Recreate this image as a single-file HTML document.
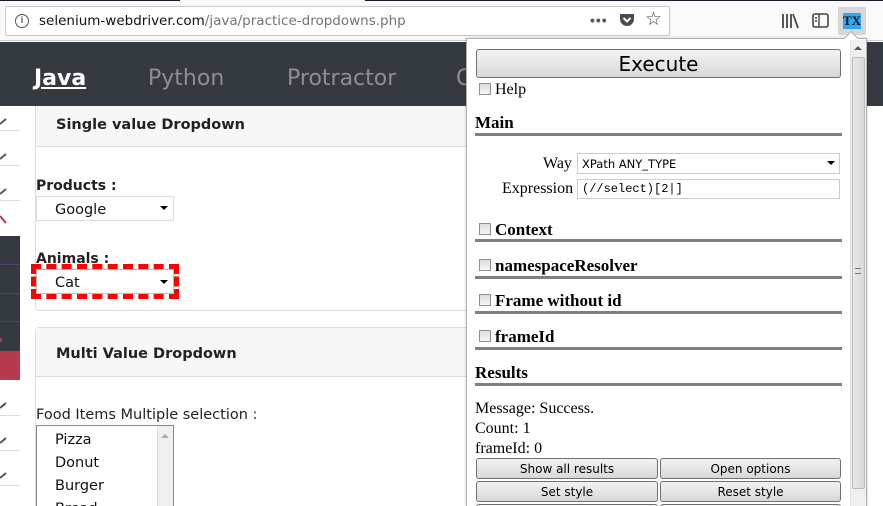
<!DOCTYPE html>
<html><head><meta charset="utf-8"><style>
*{box-sizing:border-box;margin:0;padding:0}
html,body{width:883px;height:506px;overflow:hidden}
body{background:#fff;font-family:"Liberation Sans",sans-serif}
#w{position:relative;width:883px;height:506px;overflow:hidden}
.a{position:absolute}
.sans{font-family:"DejaVu Sans","Liberation Sans",sans-serif}
.serif{font-family:"Liberation Serif",serif}
.btn{position:absolute;border:1px solid #707070;border-radius:3px;background:linear-gradient(#f2f2f2,#e6e6e6 50%,#d8d8d8);text-align:center;color:#000}
.cb{position:absolute;width:12px;height:12px;border:1px solid #8f8f8f;background:linear-gradient(#ddd,#f6f6f6)}
.rule{position:absolute;left:475px;width:367px;height:3px;background:#808080}
.h{position:absolute;left:475px;font:bold 17px "Liberation Serif",serif;color:#000}
.pen{position:absolute;left:0;width:20px;height:1px;background:#ddd}
</style></head><body><div id="w">
<div class="a" style="left:0;top:0;width:883px;height:41px;background:#f9f9fa;border-bottom:1px solid #ccc"></div>
<div class="a" style="left:0;top:0;width:180px;height:1px;background:#1a1a2a"></div>
<div class="a" style="left:365px;top:0;width:518px;height:1px;background:#1a1a2a"></div>
<div class="a" style="left:5px;top:6px;width:665px;height:30px;background:#fff;border:1px solid #c8c8c8;border-radius:2px"></div>
<div class="a" style="left:15px;top:14px;width:14px;height:14px;border:1.5px solid #555;border-radius:50%;font:bold 9px 'Liberation Sans';text-align:center;line-height:11px;color:#555">i</div>
<div class="a sans" style="left:39px;top:13px;font-size:13.5px;color:#111">selenium-webdriver.com<span style="color:#737373">/java/practice-dropdowns.php</span></div>
<div class="a" style="left:590px;top:12px;font:bold 14px 'Liberation Sans';color:#555;letter-spacing:1px">•••</div>
<svg class="a" style="left:619px;top:12px" width="16" height="16"><path d="M1 2h14v5a7 7 0 0 1-14 0z" fill="#4a4a4f"/><path d="M4.5 6l3.5 3.5 3.5-3.5" stroke="#fff" stroke-width="2" fill="none"/></svg>
<div class="a" style="left:645px;top:8px;font-size:19px;color:#444">☆</div>
<svg class="a" style="left:781px;top:13px" width="18" height="16"><path d="M2 1v14M6 1v14M10 1v14M12 1l5 14" stroke="#444" stroke-width="1.8"/></svg>
<svg class="a" style="left:812px;top:13px" width="17" height="15"><rect x="1" y="1" width="15" height="13" rx="2" fill="none" stroke="#444" stroke-width="1.6"/><path d="M7 1v13M3 5h2M3 8h2" stroke="#444" stroke-width="1.4"/></svg>
<div class="a" style="left:838px;top:7px;width:28px;height:28px;background:#d6d6d8;border-radius:2px"></div>
<div class="a serif" style="left:843px;top:13px;width:18px;height:16px;background:#2ea8f5;font:bold 13px 'Liberation Serif';color:#111;line-height:16px;text-align:center">TX</div>

<div class="a" style="left:0;top:42px;width:883px;height:64px;background:#343a40"></div>
<div class="a" style="left:34px;top:66px;font:bold 22px 'DejaVu Sans';color:#fff;text-decoration:underline">Java</div>
<div class="a sans" style="left:148px;top:66px;font-size:22px;color:#8c8f93">Python</div>
<div class="a sans" style="left:287px;top:66px;font-size:22px;color:#8c8f93">Protractor</div>
<div class="a sans" style="left:456px;top:66px;font-size:22px;color:#8c8f93">C</div>

<div class="a" style="left:0;top:106px;width:20px;height:400px;background:#fff"></div>
<div class="a" style="left:0;top:236px;width:20px;height:115px;background:#343a40"></div>
<div class="pen" style="top:264px;background:#4a4560"></div><div class="pen" style="top:293px;background:#4a4560"></div><div class="pen" style="top:321px;background:#4a4560"></div>
<div class="a" style="left:0;top:338px;width:2px;height:4px;background:#b03a4a"></div>
<div class="a" style="left:0;top:351px;width:20px;height:29px;background:#b53a4e"></div>
<div class="pen" style="top:130px"></div><div class="pen" style="top:165px"></div><div class="pen" style="top:200px"></div><div class="pen" style="top:415px"></div><div class="pen" style="top:450px"></div><div class="pen" style="top:485px"></div>
<svg class="a" style="left:0;top:114px" width="8" height="100"><path d="M0 10l6-5M0 45l6-5M0 80l6-5" stroke="#555" stroke-width="2"/></svg>
<svg class="a" style="left:0;top:214px" width="8" height="12"><path d="M0 2l6 7" stroke="#b03a4a" stroke-width="2"/></svg>
<svg class="a" style="left:0;top:398px" width="8" height="100"><path d="M0 10l6-5M0 45l6-5M0 80l6-5" stroke="#555" stroke-width="2"/></svg>

<div class="a" style="left:35px;top:106px;width:440px;height:205px;border:1px solid #ddd;border-top:none;border-radius:0 0 4px 4px"></div>
<div class="a" style="left:36px;top:106px;width:440px;height:41px;background:#f7f7f7;border-bottom:1px solid #ddd"></div>
<div class="a sans" style="left:56px;top:117px;font-size:14.5px;font-weight:bold;color:#222">Single value Dropdown</div>
<div class="a sans" style="left:36px;top:178px;font-size:14px;font-weight:bold;color:#222">Products :</div>
<div class="a" style="left:36px;top:196px;width:138px;height:25px;border:1px solid #ddd;background:#fff"></div>
<div class="a sans" style="left:55px;top:202px;font-size:14.5px;color:#111">Google</div>
<div class="a" style="left:160px;top:206px;border:4px solid transparent;border-top:4px solid #000;border-bottom:none"></div>
<div class="a sans" style="left:36px;top:251px;font-size:14px;font-weight:bold;color:#222">Animals :</div>
<div class="a" style="left:31px;top:264px;width:148px;height:35px;border:5px dashed #f00"></div>
<div class="a" style="left:36px;top:269px;width:138px;height:25px;border:1px solid #bbb;background:#fff"></div>
<div class="a sans" style="left:55px;top:275px;font-size:14.5px;color:#111">Cat</div>
<div class="a" style="left:160px;top:280px;border:4px solid transparent;border-top:4px solid #000;border-bottom:none"></div>

<div class="a" style="left:35px;top:327px;width:440px;height:190px;border:1px solid #ddd;border-radius:4px 4px 0 0"></div>
<div class="a" style="left:36px;top:328px;width:440px;height:49px;background:#f7f7f7;border-bottom:1px solid #ddd"></div>
<div class="a sans" style="left:56px;top:346px;font-size:14.5px;font-weight:bold;color:#222">Multi Value Dropdown</div>
<div class="a sans" style="left:36px;top:407px;font-size:14.5px;color:#222">Food Items Multiple selection :</div>
<div class="a" style="left:36px;top:425px;width:138px;height:90px;border:1px solid #888;background:#fff"></div>
<div class="a" style="left:157px;top:426px;width:16px;height:90px;background:#f0f0f0;border-left:1px solid #ddd"></div>
<div class="a" style="left:161px;top:434px;border:4px solid transparent;border-bottom:4px solid #aaa;border-top:none"></div>
<div class="a sans" style="left:55px;top:429px;font-size:14.5px;color:#111;line-height:23px">Pizza<br>Donut<br>Burger<br>Bread</div>

<div class="a" style="left:466px;top:38px;width:401px;height:470px;background:#fff;border:1px solid #b0b0b0;box-shadow:0 0 3px rgba(0,0,0,.2)"></div>
<div class="a" style="left:846px;top:33px;width:10px;height:10px;background:#fff;border-left:1px solid #b0b0b0;border-top:1px solid #b0b0b0;transform:rotate(45deg)"></div>
<div class="a" style="left:850px;top:40px;width:16px;height:466px;background:#f0f0f0;border-left:1px solid #e0e0e0"></div>
<div class="a" style="left:854px;top:46px;border:4px solid transparent;border-bottom:4px solid #555;border-top:none"></div>
<div class="a" style="left:852px;top:57px;width:13px;height:432px;border:1px solid #bbb;border-radius:2px;background:linear-gradient(90deg,#e8e8e8,#d8d8d8)"></div>
<div class="a" style="left:855px;top:268px;width:6px;height:6px;border-top:1px solid #777;border-bottom:1px solid #777"></div>
<div class="btn sans" style="left:476px;top:49px;width:365px;height:29px;font-size:20px;line-height:28px">Execute</div>
<div class="cb" style="left:479px;top:83px"></div>
<div class="a serif" style="left:495px;top:81px;font-size:16px">Help</div>
<div class="h" style="top:113px">Main</div><div class="rule" style="top:133px"></div>
<div class="a serif" style="left:543px;top:155px;font-size:16px">Way</div>
<div class="a" style="left:577px;top:153px;width:263px;height:21px;border:1px solid #ccc"></div>
<div class="a sans" style="left:582px;top:157px;font-size:11.5px">XPath ANY_TYPE</div>
<div class="a" style="left:827px;top:161px;border:4px solid transparent;border-top:4px solid #000;border-bottom:none"></div>
<div class="a serif" style="left:502px;top:180px;font-size:16px">Expression</div>
<div class="a" style="left:577px;top:179px;width:263px;height:20px;border:1px solid #ccc"></div>
<div class="a" style="left:582px;top:182px;font:12px 'Liberation Mono',monospace">(//select)[2|]</div>
<div class="cb" style="left:479px;top:223px"></div><div class="h" style="left:495px;top:220px">Context</div><div class="rule" style="top:239px"></div>
<div class="cb" style="left:479px;top:259px"></div><div class="h" style="left:495px;top:256px">namespaceResolver</div><div class="rule" style="top:276px"></div>
<div class="cb" style="left:479px;top:294px"></div><div class="h" style="left:495px;top:291px">Frame without id</div><div class="rule" style="top:311px"></div>
<div class="cb" style="left:479px;top:330px"></div><div class="h" style="left:495px;top:327px">frameId</div><div class="rule" style="top:347px"></div>
<div class="h" style="top:363px">Results</div><div class="rule" style="top:383px"></div>
<div class="a serif" style="left:475px;top:399px;font-size:16px;line-height:20px">Message: Success.<br>Count: 1<br>frameId: 0</div>
<div class="btn sans" style="left:476px;top:458px;width:182px;height:21px;font-size:12px;line-height:20px">Show all results</div>
<div class="btn sans" style="left:660px;top:458px;width:181px;height:21px;font-size:12px;line-height:20px">Open options</div>
<div class="btn sans" style="left:476px;top:481px;width:182px;height:21px;font-size:12px;line-height:20px">Set style</div>
<div class="btn sans" style="left:660px;top:481px;width:181px;height:21px;font-size:12px;line-height:20px">Reset style</div>
<div class="btn" style="left:476px;top:504px;width:182px;height:21px"></div>
<div class="btn" style="left:660px;top:504px;width:181px;height:21px"></div>
</div></body></html>
